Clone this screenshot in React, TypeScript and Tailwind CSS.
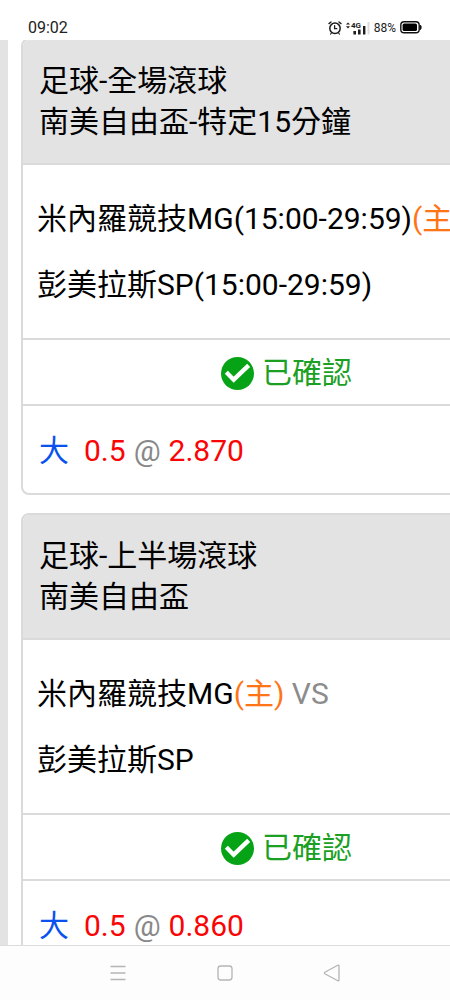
import React from "react";

interface Bet {
  id: number;
  sport: string;
  league: string;
  home: string;
  away: string;
  pick: string;
  line: string;
  odds: string;
}

const bets: Bet[] = [
  {
    id: 1,
    sport: "足球-全場滾球",
    league: "南美自由盃-特定15分鐘",
    home: "米內羅競技MG(15:00-29:59)",
    away: "彭美拉斯SP(15:00-29:59)",
    pick: "大",
    line: "0.5",
    odds: "2.870",
  },
  {
    id: 2,
    sport: "足球-上半場滾球",
    league: "南美自由盃",
    home: "米內羅競技MG",
    away: "彭美拉斯SP",
    pick: "大",
    line: "0.5",
    odds: "0.860",
  },
];

const AlarmIcon = () => (
  <svg width="14" height="16" viewBox="0 0 14 16" fill="none" stroke="#1c1c1c" strokeLinecap="round">
    <circle cx="7" cy="8.3" r="5.2" strokeWidth="1.5" />
    <path d="M1 3.6 3 2M13 3.6 11 2" strokeWidth="1.4" />
    <path d="M6.6 5.6v3.1h2.2" strokeWidth="1.3" />
    <path d="M3.4 13 2.6 14M10.6 13l.8 1" strokeWidth="1.2" />
  </svg>
);

const SignalIcon = () => (
  <svg width="24" height="16" viewBox="0 0 24 16" fill="#1c1c1c">
    <path d="M0 4.6 2 2.4l2 2.2zM0 6.2h4L2 8.4z" />
    <text x="5" y="8.2" fontSize="8" fontWeight="700" fontFamily="Roboto, sans-serif">
      4G
    </text>
    <path d="M7.4 11h2.6v3.400H7.4zM12 9.400h2.600v5H12zM17 6h2.400v8.400H17z" />
    <path d="M21.500 2h2v12.400h-2z" fill="#dcdcdc" />
  </svg>
);

const BatteryIcon = () => (
  <svg width="22" height="13" viewBox="0 0 22 13" fill="none">
    <rect x=".8" y=".8" width="18.4" height="11" rx="3.4" stroke="#111" strokeWidth="1.4" />
    <rect x="2.6" y="2.6" width="14.4" height="7.4" rx="1.6" fill="#000" />
    <path d="M20.4 4.2c1 .6 1 3.6 0 4.4z" fill="#111" stroke="#111" />
  </svg>
);

const CheckIcon = () => (
  <svg width="33" height="33" viewBox="0 0 99 99">
    <circle cx="49.5" cy="49.5" r="49.5" fill="#07a316" />
    <path d="M16 46 38 68 83 25" fill="none" stroke="#fff" strokeWidth="13" />
  </svg>
);

const StatusBar = () => (
  <header className="relative z-10 flex h-10 shrink-0 items-center justify-between bg-white pt-[15px] pr-7 pl-7 text-[#222]">
    <span className="text-base leading-6">09:02</span>
    <div className="flex items-center">
      <AlarmIcon />
      <span className="ml-1">
        <SignalIcon />
      </span>
      <span className="ml-1 text-xs leading-6">88%</span>
      <span className="ml-1">
        <BatteryIcon />
      </span>
    </div>
  </header>
);

const BetCard: React.FC<{ bet: Bet }> = ({ bet }) => (
  <article className="shrink-0 overflow-hidden rounded-lg border-2 border-[#dadada] bg-white whitespace-nowrap">
    <div className="border-b-2 border-[#dadada] bg-[#e3e3e3] pt-5 pb-[21px] pl-4 leading-[41px]">
      <h2>{bet.sport}</h2>
      <p>{bet.league}</p>
    </div>
    <div className="border-b-2 border-[#dadada] pt-[21px] pb-5 pl-3.5 leading-[66px]">
      <p>
        {bet.home}
        <span className="text-[#ff7415]">(主)</span> <span className="text-[#8c8c8c]">VS</span>
      </p>
      <p>{bet.away}</p>
    </div>
    <div className="flex items-center justify-center gap-2 border-b-2 border-[#dadada] pt-[13px] pb-[11px] leading-10 text-[#1ba023]">
      <CheckIcon />
      <span>已確認</span>
    </div>
    <div className="flex items-center pt-[25px] pb-[22px] pl-4 leading-10">
      <span className="mr-[15px] text-[#0a52f0]">{bet.pick}</span>
      <span className="text-[#fa0505]">{bet.line}</span>
      <span className="mx-2 text-[#888]">@</span>
      <span className="text-[#fa0505]">{bet.odds}</span>
    </div>
  </article>
);

const NavBar = () => (
  <nav className="flex h-[55px] shrink-0 items-center justify-center gap-[83px] border-t border-[#dcdcdc] bg-[#fdfdfd]">
    <button type="button" aria-label="Menu">
      <svg width="24" height="24" viewBox="0 0 24 24" fill="none" stroke="#b5b5b5" strokeWidth="1.4">
        <path d="M4.500 5.500h15M4.500 12h15M4.500 18.500h15" />
      </svg>
    </button>
    <button type="button" aria-label="Home">
      <svg width="24" height="24" viewBox="0 0 24 24" fill="none" stroke="#b5b5b5" strokeWidth="1.3">
        <rect x="5" y="5" width="14" height="14" rx="2.800" />
      </svg>
    </button>
    <button type="button" aria-label="Back">
      <svg width="24" height="24" viewBox="0 0 24 24" fill="none" stroke="#b5b5b5" strokeWidth="1.3" strokeLinejoin="round">
        <path d="M4.800 11.300 17.800 4.200Q19 4 19 5.200V18.800Q19 20 17.800 19.700L4.800 12.700Q4 12 4.800 11.300z" />
      </svg>
    </button>
  </nav>
);

const App: React.FC = () => {
  return (
    <div className="flex h-screen flex-col overflow-hidden bg-white font-[Roboto,'Noto_Sans_CJK_TC',sans-serif]">
      <StatusBar />
      <main className="flex min-h-0 flex-1 overflow-hidden">
        <div className="w-2 shrink-0 bg-[#e3e3e3]" />
        {/* the slip list is wider than the screen */}
        <div className="-mt-0.5 ml-[13px] flex w-[118vw] shrink-0 flex-col gap-[18px] text-[30px] text-black">
          {bets.map((bet) => (
            <BetCard key={bet.id} bet={bet} />
          ))}
        </div>
      </main>
      <NavBar />
    </div>
  );
};

export default App;
